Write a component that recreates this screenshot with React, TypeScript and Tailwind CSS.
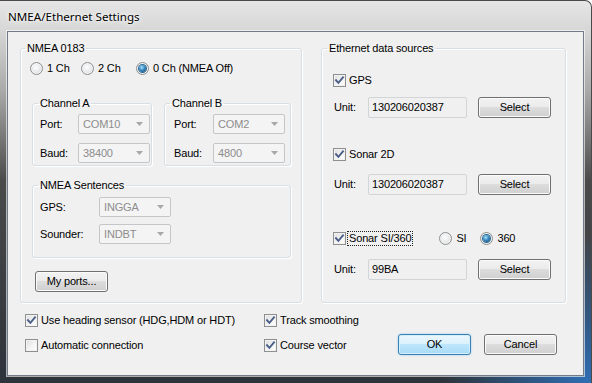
import type { ReactNode } from 'react';

function Radio({ checked, label, className = '' }: { checked?: boolean; label: string; className?: string }) {
  return (
    <div className={`flex h-[13px] items-center gap-[4px] ${className}`}>
      <span className="flex h-[13px] w-[13px] shrink-0 items-center justify-center rounded-full border border-[#8e8f8f] bg-[radial-gradient(circle_at_45%_40%,#ffffff,#e2e4e6_60%,#c8cbcf)] shadow-[inset_0_0_0_1px_#f4f4f4]">
        {checked && (
          <span className="h-[7px] w-[7px] rounded-full bg-[radial-gradient(circle_at_40%_35%,#a9e2fb,#3b8cc4_45%,#19557f_80%)] shadow-[0_0_0_1px_#2d6a94]" />
        )}
      </span>
      <span>{label}</span>
    </div>
  );
}

function Check({ checked, label, focus }: { checked?: boolean; label: string; focus?: boolean }) {
  return (
    <div className="flex h-[13px] items-center gap-[2px]">
      <span className="flex h-[13px] w-[13px] shrink-0 items-center justify-center border border-[#8e8f8f] bg-[linear-gradient(135deg,#dcdcdc,#f4f4f4_55%,#ffffff)] shadow-[inset_0_0_0_1px_#f2f2f2]">
        {checked && (
          <svg width="11" height="11" viewBox="0 0 11 11">
            <path d="M2 5.2 L4.4 7.8 L9 2.4" fill="none" stroke="#4c5f88" strokeWidth="1.9" strokeLinecap="square" />
          </svg>
        )}
      </span>
      <span className={`px-[1px] leading-[13px] ${focus ? 'outline outline-1 outline-dotted outline-[#222]' : ''}`}>
        {label}
      </span>
    </div>
  );
}

function Combo({ value }: { value: string }) {
  return (
    <div className="flex h-[20px] w-[72px] items-center justify-between rounded-[2px] border border-[#c4c6c8] bg-[#f4f4f4] pl-[4px] pr-[6px] text-[#8d8d8d]">
      <span>{value}</span>
      <svg width="7" height="4" viewBox="0 0 7 4">
        <path d="M0 0 H7 L3.5 4 Z" fill="#a8a8a8" />
      </svg>
    </div>
  );
}

function Btn({ children, primary, className = '' }: { children: ReactNode; primary?: boolean; className?: string }) {
  return (
    <div
      className={`flex h-[21px] w-[73px] items-center justify-center rounded-[3px] border ${
        primary
          ? 'border-[#3c7fb1] bg-[linear-gradient(180deg,#ecf7fd_0%,#daf1fc_48%,#bde6fd_50%,#a8daf6_100%)] shadow-[inset_0_0_0_1px_#d3effc,0_0_2px_#7fc6ee]'
          : 'border-[#707070] bg-[linear-gradient(180deg,#f2f2f2_0%,#ebebeb_48%,#dddddd_50%,#cfcfcf_100%)] shadow-[inset_0_0_0_1px_#fbfbfb]'
      } ${className}`}
    >
      {children}
    </div>
  );
}

// legendClass carries the negative margin that undoes the fieldset's left padding
function Group({
  title,
  className = '',
  legendClass = '',
  children,
}: {
  title: string;
  className?: string;
  legendClass?: string;
  children: ReactNode;
}) {
  return (
    <fieldset className={`rounded-[3px] border border-[#d5dfe5] shadow-[inset_1px_1px_0_#ffffff,1px_1px_0_#ffffff] ${className}`}>
      <legend className={`px-[2px] leading-[13px] ${legendClass}`}>{title}</legend>
      {children}
    </fieldset>
  );
}

function UnitRow({ value, className = '' }: { value: string; className?: string }) {
  return (
    <div className={`flex items-center ${className}`}>
      <span className="w-[35px] pl-[1px]">Unit:</span>
      <div className="flex h-[21px] w-[99px] items-center rounded-[2px] border border-[#d2d5d8] bg-[#f0f0f0] pl-[3px]">
        {value}
      </div>
      <Btn className="ml-[11px]">Select</Btn>
    </div>
  );
}

export default function App() {
  return (
    <div className="relative h-[383px] w-[592px] overflow-hidden rounded-tr-[7px] border-r border-t border-[#4a4a4a] bg-[radial-gradient(circle_at_100%_100%,#2f6fb4_0,rgba(47,111,180,0)_150px),linear-gradient(180deg,#e6e6e6_0px,#d6d6d6_30px,#a9a9a9_90px,#4a4a4a_180px,#2d333a_100%)] font-[Liberation_Sans,Arial,sans-serif] text-[11px] leading-[13px] tracking-[-0.15px] text-black">
      <div className="h-[30px] pl-[8px] pt-[8px] font-[Noto_Sans,sans-serif] text-[11.6px] leading-[15px] tracking-normal [text-shadow:0_0_6px_#ffffff,0_0_3px_#ffffff]">
        NMEA/Ethernet Settings
      </div>
      <div className="mx-[7px] h-[345px] border border-[#6f7b87] bg-[#f0f0f0] shadow-[0_0_0_1px_rgba(255,255,255,0.6)]">
        <div className="flex items-stretch pl-[12px] pt-[10px]">
          <Group title="NMEA 0183" className="w-[282px] pb-[10px] pl-[11px]" legendClass="-ml-[7px]">
            <div className="-ml-[2px] mt-[7px] flex">
              <Radio label="1 Ch" className="w-[51px]" />
              <Radio label="2 Ch" className="w-[55px]" />
              <Radio label="0 Ch (NMEA Off)" checked />
            </div>
            <div className="mt-[22px] flex gap-[12px]">
              <Group title="Channel A" className="w-[120px] pb-[2px] pl-[7px]" legendClass="-ml-[2px]">
                <div className="mt-[4px] flex items-center">
                  <span className="w-[38px]">Port:</span>
                  <Combo value="COM10" />
                </div>
                <div className="mt-[9px] flex items-center">
                  <span className="w-[38px]">Baud:</span>
                  <Combo value="38400" />
                </div>
              </Group>
              <Group title="Channel B" className="w-[127px] pb-[2px] pl-[9px]" legendClass="-ml-[4px]">
                <div className="mt-[4px] flex items-center">
                  <span className="w-[39px]">Port:</span>
                  <Combo value="COM2" />
                </div>
                <div className="mt-[9px] flex items-center">
                  <span className="w-[39px]">Baud:</span>
                  <Combo value="4800" />
                </div>
              </Group>
            </div>
            <Group title="NMEA Sentences" className="mt-[13px] w-[259px] pb-[13px] pl-[7px]" legendClass="-ml-[2px]">
              <div className="mt-[5px] flex items-center">
                <span className="w-[59px]">GPS:</span>
                <Combo value="INGGA" />
              </div>
              <div className="mt-[7px] flex items-center">
                <span className="w-[59px]">Sounder:</span>
                <Combo value="INDBT" />
              </div>
            </Group>
            <Btn className="ml-[3px] mt-[13px]">My ports...</Btn>
          </Group>

          <Group title="Ethernet data sources" className="ml-[19px] w-[245px] pl-[11px]" legendClass="-ml-[6px]">
            <div className="mt-[19px]">
              <Check label="GPS" checked />
            </div>
            <UnitRow value="130206020387" className="mt-[10px]" />
            <div className="mt-[30px]">
              <Check label="Sonar 2D" checked />
            </div>
            <UnitRow value="130206020387" className="mt-[13px]" />
            <div className="mt-[37px] flex items-center">
              <Check label="Sonar SI/360" checked focus />
              <Radio label="SI" className="ml-[27px] w-[41px]" />
              <Radio label="360" checked />
            </div>
            <UnitRow value="99BA" className="mt-[14px]" />
          </Group>
        </div>

        <div className="mt-[11px] flex items-start pl-[17px]">
          <div className="flex w-[239px] flex-col gap-[12px]">
            <Check label="Use heading sensor (HDG,HDM or HDT)" checked />
            <Check label="Automatic connection" />
          </div>
          <div className="flex w-[134px] flex-col gap-[12px]">
            <Check label="Track smoothing" checked />
            <Check label="Course vector" checked />
          </div>
          <div className="mt-[20px] flex gap-[13px]">
            <Btn primary>OK</Btn>
            <Btn>Cancel</Btn>
          </div>
        </div>
      </div>
    </div>
  );
}
